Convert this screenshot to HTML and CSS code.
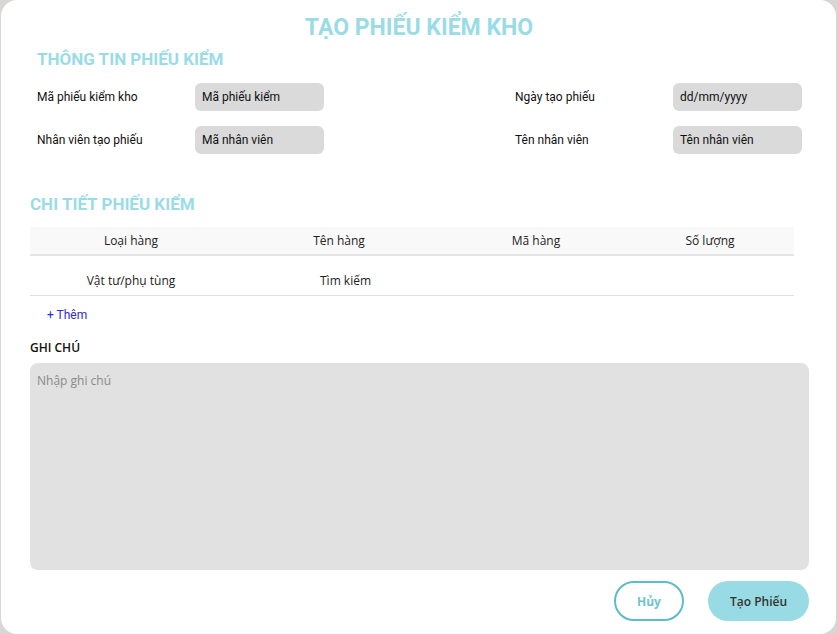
FILE: index.html
```html
<!DOCTYPE html>
<html lang="vi">
<head>
<meta charset="utf-8">
<link rel="stylesheet" href="styles.css">
</head>
<body>
<div class="modal">
  <h1 class="title">TẠO PHIẾU KIỂM KHO</h1>
  <h2 class="section info-title">THÔNG TIN PHIẾU KIỂM</h2>
  <div class="info-grid">
    <div class="field">
      <span class="label">Mã phiếu kiểm kho</span>
      <span class="input">Mã phiếu kiểm</span>
    </div>
    <div class="field">
      <span class="label">Ngày tạo phiếu</span>
      <span class="input">dd/mm/yyyy</span>
    </div>
    <div class="field">
      <span class="label">Nhân viên tạo phiếu</span>
      <span class="input">Mã nhân viên</span>
    </div>
    <div class="field">
      <span class="label">Tên nhân viên</span>
      <span class="input">Tên nhân viên</span>
    </div>
  </div>
  <h2 class="section detail-title">CHI TIẾT PHIẾU KIỂM</h2>
  <div class="table">
    <div class="thead">
      <span class="c1">Loại hàng</span>
      <span class="c2">Tên hàng</span>
      <span class="c3">Mã hàng</span>
      <span class="c4">Số lượng</span>
    </div>
    <div class="trow">
      <span class="c1">Vật tư/phụ tùng</span>
      <span class="c2 search">Tìm kiếm</span>
      <span class="c3"></span>
      <span class="c4"></span>
    </div>
  </div>
  <div class="add">+ Thêm</div>
  <div class="note-label">GHI CHÚ</div>
  <div class="note">Nhập ghi chú</div>
  <div class="actions">
    <button class="btn cancel">Hủy</button>
    <button class="btn create">Tạo Phiếu</button>
  </div>
</div>
</body>
</html>
```
FILE: styles.css
```css
html, body {
  margin: 0;
  padding: 0;
  background: #d9d5d5;
}
body {
  width: 837px;
  height: 634px;
  overflow: hidden;
}
.modal {
  box-sizing: border-box;
  margin-left: 1px;
  width: 835px;
  height: 634px;
  background: #fff;
  border-radius: 16px;
  padding: 14px 28px 0 29px;
  display: flex;
  flex-direction: column;
  font-family: Roboto, "Noto Sans", sans-serif;
  color: #222;
}
.title {
  margin: 0;
  text-align: center;
  font-family: Roboto, sans-serif;
  font-weight: 700;
  font-size: 23px;
  line-height: 28px;
  color: #9adce6;
}
.section {
  margin: 0;
  font-family: Roboto, sans-serif;
  font-weight: 700;
  font-size: 17px;
  line-height: 20px;
  color: #9adce6;
}
.info-title {
  margin-top: 7px;
  margin-left: 7px;
}
.info-grid {
  display: grid;
  grid-template-columns: 478px 1fr;
  row-gap: 15px;
  margin-top: 14px;
  margin-left: 7px;
}
.field {
  display: flex;
  align-items: center;
}
.label {
  width: 158px;
  font-size: 12px;
  color: #111;
}
.input {
  box-sizing: border-box;
  width: 129px;
  height: 28px;
  border-radius: 6px;
  background: #dadada;
  padding: 0 7px;
  display: flex;
  align-items: center;
  font-size: 12px;
  color: #111;
}
.detail-title {
  margin-top: 40px;
}
.table {
  width: 764px;
  margin-top: 13px;
  font-family: "Open Sans", sans-serif;
  font-size: 12px;
  line-height: 16px;
  color: #222;
}
.thead, .trow {
  display: grid;
  grid-template-columns: 202px 214px 180px 168px;
}
.thead {
  height: 27px;
  align-items: center;
  background: #f9f9f9;
  border-bottom: 2px solid #e4e4e4;
}
.trow {
  box-sizing: border-box;
  height: 40px;
  padding-top: 17px;
  align-items: start;
  border-bottom: 1px solid #e0e0e0;
}
.thead span, .trow span {
  text-align: center;
}
.trow .search {
  text-align: left;
  padding-left: 88px;
}
.add {
  margin-top: 11px;
  margin-left: 17px;
  font-family: Roboto, sans-serif;
  font-size: 12px;
  line-height: 16px;
  color: #2a2ae0;
}
.note-label {
  margin-top: 17px;
  font-family: "Open Sans", sans-serif;
  font-weight: 600;
  font-size: 12px;
  line-height: 16px;
  color: #111;
}
.note {
  box-sizing: border-box;
  margin-top: 7px;
  width: 779px;
  height: 207px;
  background: #e1e1e1;
  border-radius: 8px;
  padding: 9px 7px;
  font-family: "Open Sans", sans-serif;
  font-size: 12px;
  color: #8a8a8a;
}
.actions {
  display: flex;
  justify-content: flex-end;
  gap: 24px;
  margin-top: 11px;
  width: 779px;
}
.btn {
  box-sizing: border-box;
  height: 40px;
  border-radius: 20px;
  font-family: "Open Sans", sans-serif;
  font-weight: 600;
  font-size: 12px;
  cursor: pointer;
}
.cancel {
  width: 70px;
  background: #fff;
  border: 2px solid #5cbcc8;
  color: #6cc4cf;
  font-weight: 700;
}
.create {
  width: 101px;
  background: #98dbe4;
  border: none;
  color: #333;
}
```
